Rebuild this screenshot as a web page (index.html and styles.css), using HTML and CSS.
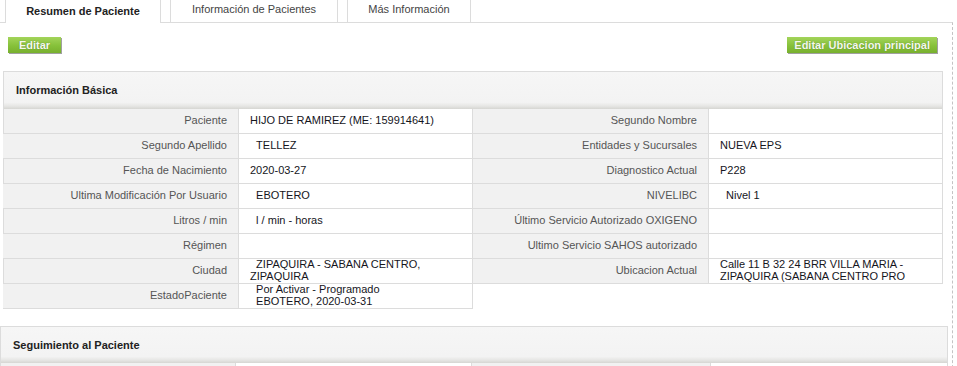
FILE: index.html
```html
<!DOCTYPE html>
<html lang="es">
<head>
    <meta charset="UTF-8">
    <meta name="viewport" content="width=device-width, initial-scale=1.0">
    <title>Resumen de Paciente</title>
    <link rel="stylesheet" href="styles.css">
</head>
<body>
    <div class="tabs">
        <div class="tab tab-1 active">Resumen de Paciente</div>
        <div class="tab tab-2">Información de Pacientes</div>
        <div class="tab tab-3">Más Información</div>
    </div>

    <div class="panel">
        <div class="actions">
            <button class="btn btn-sm">Editar</button>
            <button class="btn">Editar Ubicacion principal</button>
        </div>

        <!-- Datos basicos -->
        <section class="box">
            <h3 class="box-head">Información Básica</h3>
            <div class="box-body">
                <div class="kv kv-left">
                    <div class="lbl">Paciente</div>
                    <div class="val">HIJO DE RAMIREZ (ME: 159914641)</div>
                    <div class="lbl">Segundo Apellido</div>
                    <div class="val">&nbsp;&nbsp;TELLEZ</div>
                    <div class="lbl">Fecha de Nacimiento</div>
                    <div class="val">2020-03-27</div>
                    <div class="lbl">Ultima Modificación Por Usuario</div>
                    <div class="val">&nbsp;&nbsp;EBOTERO</div>
                    <div class="lbl">Litros / min</div>
                    <div class="val">&nbsp;&nbsp;l / min - horas</div>
                    <div class="lbl">Régimen</div>
                    <div class="val"></div>
                    <div class="lbl">Ciudad</div>
                    <div class="val">&nbsp;&nbsp;ZIPAQUIRA - SABANA CENTRO,<br>ZIPAQUIRA</div>
                    <div class="lbl">EstadoPaciente</div>
                    <div class="val">&nbsp;&nbsp;Por Activar - Programado<br>&nbsp;&nbsp;EBOTERO, 2020-03-31</div>
                </div>
                <div class="kv kv-right">
                    <div class="lbl">Segundo Nombre</div>
                    <div class="val"></div>
                    <div class="lbl">Entidades y Sucursales</div>
                    <div class="val">NUEVA EPS</div>
                    <div class="lbl">Diagnostico Actual</div>
                    <div class="val">P228</div>
                    <div class="lbl">NIVELIBC</div>
                    <div class="val">&nbsp;&nbsp;Nivel 1</div>
                    <div class="lbl">Último Servicio Autorizado OXIGENO</div>
                    <div class="val"></div>
                    <div class="lbl">Ultimo Servicio SAHOS autorizado</div>
                    <div class="val"></div>
                    <div class="lbl">Ubicacion Actual</div>
                    <div class="val">Calle 11 B 32 24 BRR VILLA MARIA -<br>ZIPAQUIRA (SABANA CENTRO PRO</div>
                </div>
            </div>
        </section>

        <!-- Seguimiento -->
        <section class="box box-wide">
            <h3 class="box-head">Seguimiento al Paciente</h3>
            <div class="box-body">
                <div class="kv kv-wide">
                    <div class="lbl"></div>
                    <div class="val"></div>
                    <div class="lbl"></div>
                    <div class="val"></div>
                </div>
            </div>
        </section>
    </div>
</body>
</html>
```

FILE: styles.css
```css
* {
    margin: 0;
    padding: 0;
    box-sizing: border-box;
}

body {
    font-family: "Liberation Sans", Arial, sans-serif;
    font-size: 11px;
    color: #222;
    background: #fff;
}

/* Tabs */
.tabs {
    display: flex;
    gap: 9px;
    padding-left: 5px;
    height: 22px;
    position: relative;
    z-index: 2;
}

.tab {
    height: 22px;
    line-height: 18px;
    text-align: center;
    border: 1px solid #dcdcdc;
    border-top: none;
    border-bottom: none;
    color: #444;
    background: #fff;
    white-space: nowrap;
}

.tab-1 { width: 156px; }
.tab-2 { width: 168px; }
.tab-3 { width: 124px; }

.tab.active {
    height: 23px;
    padding-top: 2px;
    font-weight: bold;
    color: #222;
}

/* Panel */
.panel {
    width: 953px;
    min-height: 344px;
    border-top: 1px solid #dcdcdc;
    border-right: 1px dashed #c4c4c4;
}

.actions {
    display: flex;
    justify-content: space-between;
    padding: 14px 15px 0 8px;
}

.btn {
    height: 16px;
    padding: 0 7px;
    border: none;
    background: linear-gradient(#a3d45a, #86c13a 55%, #78b02e);
    color: #f4f8ee;
    font-family: inherit;
    font-size: 11px;
    font-weight: bold;
    line-height: 16px;
    text-shadow: 0 0 1px rgba(60, 90, 20, 0.6);
    box-shadow: 1px 1px 0 #a0a0a0;
    cursor: pointer;
}

.btn-sm {
    min-width: 53px;
}

/* Sections */
.box {
    margin: 18px 0 0 3px;
    width: 940px;
}

.box-head {
    height: 38px;
    padding-left: 12px;
    line-height: 37px;
    font-size: 11px;
    font-weight: bold;
    color: #222;
    border: 1px solid #dcdcdc;
    border-bottom: none;
    background: linear-gradient(#f6f6f6 0, #f3f3f3 82%, #e6e6e4 92%, #d6d6d2 100%);
}

.box-body {
    display: flex;
    align-items: flex-start;
}

.kv {
    display: grid;
    width: 470px;
    grid-template-columns: 236px 234px;
}

.kv-left .lbl:nth-child(4n+1) {
    border-left: 1px solid #dcdcdc;
}

.lbl,
.val {
    min-height: 25px;
    display: flex;
    align-items: center;
    border-right: 1px solid #dcdcdc;
    border-bottom: 1px solid #dcdcdc;
    line-height: 11.6px;
}

.lbl {
    justify-content: flex-end;
    padding-right: 11px;
    background: #f1f1f1;
    color: #555;
    white-space: nowrap;
}

.val {
    padding-left: 11px;
    color: #15151c;
    background: #fff;
    overflow: hidden;
}

.box-wide {
    margin: 17px 0 0 0;
    width: 948px;
}

.box-wide .box-head {
    height: 37px;
    line-height: 36px;
}

.kv-wide {
    width: 948px;
    grid-template-columns: 236px 236px 239px 237px;
}

.kv-wide .lbl:first-child {
    border-left: 1px solid #dcdcdc;
}
```
